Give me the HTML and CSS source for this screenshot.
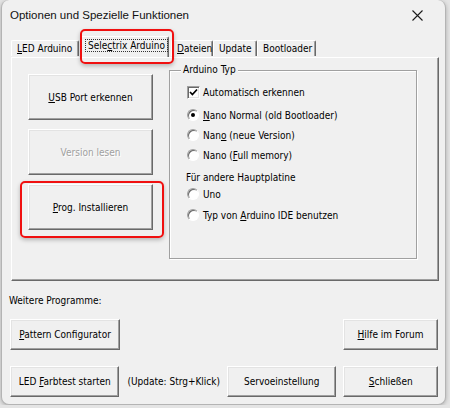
FILE: index.html
```html
<!DOCTYPE html>
<html lang="de">
<head>
  <meta charset="UTF-8" />
  <meta name="viewport" content="width=device-width, initial-scale=1" />
  <title>Optionen und Spezielle Funktionen</title>
  <link rel="stylesheet" href="styles.css">
</head>
<body>
  <div class="window">
    <div class="titlebar">
      <span class="title">Optionen und Spezielle Funktionen</span>
      <svg class="close" width="11" height="11" viewBox="0 0 11 11">
        <path d="M0.5 0.5 L10.5 10.5 M10.5 0.5 L0.5 10.5" stroke="#1a1a1a" stroke-width="1.1" fill="none" />
      </svg>
    </div>

    <div class="tabs">
      <div class="tab tab-led"><u>L</u>ED Arduino</div>
      <div class="tab tab-active"><span class="focus">Sele<u>c</u>trix Arduino</span></div>
      <div class="tab tab-files"><u>D</u>ateien</div>
      <div class="tab tab-update">Update</div>
      <div class="tab tab-boot">Bootloader</div>
    </div>

    <div class="panel">
      <div class="actions">
        <button class="btn btn-big"><u>U</u>SB Port erkennen</button>
        <button class="btn btn-big" disabled>Version lesen</button>
        <button class="btn btn-big"><u>P</u>rog. Installieren</button>
      </div>

      <div class="group">
        <span class="group-title">Arduino Typ</span>
        <div class="row row-check">
          <span class="checkbox">
            <svg width="9" height="9" viewBox="0 0 9 9">
              <path d="M1 4 L3.4 6.6 L8 1.5" stroke="#000" stroke-width="1.7" fill="none" />
            </svg>
          </span>
          <span>Automatisch erkennen</span>
        </div>
        <div class="row row-first"><span class="radio radio-on"></span><span><u>N</u>ano Normal (old Bootloader)</span></div>
        <div class="row"><span class="radio"></span><span>Nan<u>o</u> (neue Version)</span></div>
        <div class="row"><span class="radio"></span><span>Nano (<u>F</u>ull memory)</span></div>
        <div class="subtitle">Für andere Hauptplatine</div>
        <div class="row row-short"><span class="radio"></span><span>Uno</span></div>
        <div class="row row-last"><span class="radio"></span><span>Typ von <u>A</u>rduino IDE benutzen</span></div>
      </div>
    </div>

    <div class="extras">
      <div class="extras-title">Weitere Programme:</div>
      <div class="extras-row">
        <button class="btn btn-wide"><u>P</u>attern Configurator</button>
        <button class="btn btn-narrow push"><u>H</u>ilfe im Forum</button>
      </div>
      <div class="extras-row extras-row-last">
        <button class="btn btn-wide">LED <u>F</u>arbtest starten</button>
        <span class="hint">(Update: Strg+Klick)</span>
        <button class="btn btn-wide push">Servoeinstellung</button>
        <button class="btn btn-narrow"><u>S</u>chließen</button>
      </div>
    </div>

    <!-- red highlight frames -->
    <div class="mark mark-tab"></div>
    <div class="mark mark-prog"></div>
  </div>
</body>
</html>
```

FILE: styles.css
```css
body {
  margin: 0;
  background: #e4e4e4;
  font-family: "DejaVu Sans Condensed", "DejaVu Sans", sans-serif;
  font-stretch: condensed;
  font-size: 10px;
  color: #000;
}
u {
  text-decoration-thickness: 1px;
  text-underline-offset: 1px;
}
.window {
  position: relative;
  margin-left: 1px;
  width: 445px;
  height: 405px;
  box-sizing: border-box;
  background: #f0f0f0;
  border: 1px solid #b4b4b4;
  border-top: none;
  border-radius: 8px;
  box-shadow: 0 1px 4px rgba(0,0,0,0.25);
}
.titlebar {
  height: 30px;
  display: flex;
  align-items: center;
  padding: 0 0 0 8px;
}
.title {
  font-family: "Liberation Sans", sans-serif;
  font-stretch: normal;
  font-size: 11.5px;
  color: #111;
}
.close {
  margin-left: auto;
  margin-right: 22px;
}

/* tab strip */
.tabs {
  display: flex;
  align-items: flex-end;
  padding: 7px 0 0 9px;
  height: 20px;
  position: relative;
  z-index: 1;
}
.tab {
  height: 16px;
  line-height: 16px;
  box-sizing: border-box;
  padding: 0 5px;
  border-top: 1px solid #fff;
  border-left: 1px solid #fff;
  border-right: 1px solid #696969;
  box-shadow: inset -1px 0 #a0a0a0;
  border-radius: 2px 2px 0 0;
  white-space: nowrap;
  margin-bottom: 1px;
}
.tab-led { width: 68px; }
.tab-files { width: 42px; margin-left: 2px; }
.tab-update { width: 44px; }
.tab-boot { width: 59px; }
.tab-active {
  width: 88px;
  height: 21px;
  line-height: 18px;
  margin: 0 0 0 2px;
  padding: 0 3px;
  background: #f0f0f0;
}
.focus {
  border: 1px dotted #333;
  padding: 0 2px;
}

/* page of the selected tab */
.panel {
  margin-left: 9px;
  width: 428px;
  height: 224px;
  box-sizing: border-box;
  border: 1px solid #fff;
  border-right-color: #696969;
  border-bottom-color: #696969;
  box-shadow: inset -1px -1px #a0a0a0;
  display: grid;
  grid-template-columns: 125px 248px;
  column-gap: 16px;
  align-items: start;
  padding: 12px 0 0 16px;
}
.actions {
  display: flex;
  flex-direction: column;
  gap: 9px;
  margin-top: 4px;
}

.btn {
  font: inherit;
  color: #000;
  background: #f0f0f0;
  border: 1px solid #fff;
  border-right-color: #696969;
  border-bottom-color: #696969;
  box-shadow: inset -1px -1px #a0a0a0, inset 1px 1px #e3e3e3;
  padding: 0;
  border-radius: 0;
  white-space: nowrap;
}
.btn:disabled {
  color: #a0a0a0;
  text-shadow: 1px 1px #fff;
}
.btn-big { width: 125px; height: 46px; }
.btn-wide { width: 110px; height: 31px; }
.btn-narrow { width: 95px; height: 31px; }

/* Arduino Typ frame */
.group {
  position: relative;
  height: 189px;
  box-sizing: border-box;
  border: 1px solid #a0a0a0;
  box-shadow: 1px 1px 0 #fff, inset 1px 1px 0 #fff;
  padding: 11px 0 0 17px;
}
.group-title {
  position: absolute;
  top: -8px;
  left: 11px;
  padding: 0 2px;
  line-height: 14px;
  background: #f0f0f0;
}
.row {
  display: flex;
  align-items: center;
  gap: 4px;
  height: 20px;
  white-space: nowrap;
}
.row-check { gap: 3px; }
.row-first { margin-top: 3px; }
.row-short { height: 16px; }
.row-last { margin-top: 3px; }
.subtitle {
  margin: 5px 0 0 -1px;
  height: 16px;
  line-height: 16px;
}
.checkbox {
  width: 13px;
  height: 13px;
  box-sizing: border-box;
  background: #fff;
  border: 1px solid #a0a0a0;
  border-right-color: #fff;
  border-bottom-color: #fff;
  box-shadow: inset 1px 1px #696969, inset -1px -1px #e3e3e3;
  display: flex;
  align-items: center;
  justify-content: center;
}
.radio {
  width: 12px;
  height: 12px;
  box-sizing: border-box;
  border-radius: 50%;
  background: #fff;
  border: 1px solid #a0a0a0;
  border-right-color: #fff;
  border-bottom-color: #fff;
  box-shadow: inset 1px 1px #696969;
  position: relative;
  flex: none;
}
.radio-on::after {
  content: "";
  position: absolute;
  left: 3px;
  top: 3px;
  width: 4px;
  height: 4px;
  border-radius: 50%;
  background: #000;
}

/* area under the tabs */
.extras {
  padding: 0 7px 0 7px;
}
.extras-title {
  margin-top: 13px;
  line-height: 14px;
}
.extras-row {
  display: flex;
  align-items: center;
  margin-top: 11px;
  padding-left: 1px;
  gap: 7px;
}
.extras-row-last {
  margin-top: 16px;
}
.hint {
  margin-left: 1px;
  white-space: nowrap;
}
.push {
  margin-left: auto;
}

.mark {
  position: absolute;
  border: 2px solid #f01010;
  border-radius: 5px;
  box-shadow: 0 2px 4px rgba(0,0,0,0.25);
  z-index: 2;
}
.mark-tab {
  left: 78px;
  top: 29px;
  width: 90px;
  height: 31px;
}
.mark-prog {
  left: 18px;
  top: 181px;
  width: 140px;
  height: 53px;
}
```
